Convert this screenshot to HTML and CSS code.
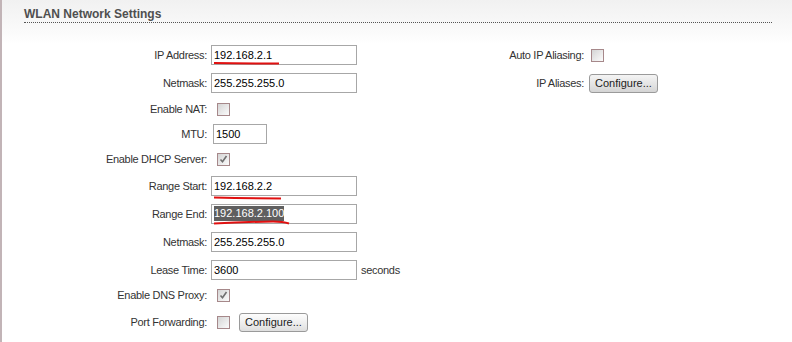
FILE: index.html
```html
<!DOCTYPE html>
<html>
<head>
  <title>WLAN Network Settings</title>
  <link rel="stylesheet" href="styles.css">
</head>
<body>
<div class="page">
  <div class="section">
    <h2 class="title">WLAN Network Settings</h2>
    <div class="form">
      <!-- row 1 -->
      <label class="lbl">IP Address:</label>
      <div class="ctl">
        <span class="mark">
          <input type="text" class="txt" value="192.168.2.1">
          <svg class="scribble s1" width="70" height="4" viewBox="0 0 70 4"><path d="M1 2 L20 2.2 L66 2.6" stroke="#e01010" stroke-width="2" fill="none"/></svg>
        </span>
      </div>
      <label class="lbl">Auto IP Aliasing:</label>
      <div class="ctl"><span class="chk right"></span></div>

      <!-- row 2 -->
      <label class="lbl">Netmask:</label>
      <div class="ctl"><input type="text" class="txt" value="255.255.255.0"></div>
      <label class="lbl">IP Aliases:</label>
      <div class="ctl"><button class="btn right">Configure...</button></div>

      <label class="lbl">Enable NAT:</label>
      <div class="ctl wide"><span class="chk"></span></div>

      <label class="lbl">MTU:</label>
      <div class="ctl wide"><input type="text" class="txt short" value="1500"></div>

      <label class="lbl">Enable DHCP Server:</label>
      <div class="ctl wide"><span class="chk on"><svg width="11" height="11" viewBox="0 0 11 11"><path d="M2.5 5.5 L4.5 7.8 L8.5 2" stroke="#6f6f6f" stroke-width="1.6" fill="none"/></svg></span></div>

      <label class="lbl">Range Start:</label>
      <div class="ctl wide">
        <span class="mark">
          <input type="text" class="txt" value="192.168.2.2">
          <svg class="scribble s2" width="70" height="4" viewBox="0 0 70 4"><path d="M1 1.5 L22 2 L68 2.5" stroke="#e01010" stroke-width="2" fill="none"/></svg>
        </span>
      </div>

      <label class="lbl">Range End:</label>
      <div class="ctl wide">
        <span class="mark">
          <div class="txt"><span class="sel">192.168.2.100</span></div>
          <svg class="scribble s3" width="80" height="6" viewBox="0 0 80 6"><path d="M1 4.5 Q30 3 60 2.5 Q70 2.5 76 4.5" stroke="#e01010" stroke-width="2" fill="none"/></svg>
        </span>
      </div>

      <label class="lbl">Netmask:</label>
      <div class="ctl wide"><input type="text" class="txt" value="255.255.255.0"></div>

      <label class="lbl">Lease Time:</label>
      <div class="ctl wide"><input type="text" class="txt" value="3600"><span class="unit">seconds</span></div>

      <label class="lbl">Enable DNS Proxy:</label>
      <div class="ctl wide"><span class="chk on"><svg width="11" height="11" viewBox="0 0 11 11"><path d="M2.5 5.5 L4.5 7.8 L8.5 2" stroke="#6f6f6f" stroke-width="1.6" fill="none"/></svg></span></div>

      <label class="lbl">Port Forwarding:</label>
      <div class="ctl wide"><span class="chk"></span><button class="btn">Configure...</button></div>
    </div>
  </div>
</div>
</body>
</html>
```

FILE: styles.css
```css
* {
  box-sizing: border-box;
}
body {
  margin: 0;
  padding: 0;
  font-family: "Liberation Sans", Arial, sans-serif;
  font-size: 11px;
  color: #333;
  background: #fff;
}
.page {
  height: 342px;
  border-left: 2px solid #c2b4b7;
  background: linear-gradient(#f1f1f1, #fafafa 30px, #fff 44px);
}
.section {
  padding: 0 20px 0 22px;
}
.title {
  margin: 0;
  padding: 7px 0 1px;
  font-size: 12px;
  line-height: 14px;
  font-weight: bold;
  color: #4f4f4f;
  border-bottom: 1px dotted #555;
}
.form {
  margin-top: 18px;
  display: grid;
  grid-template-columns: 183px 229px 140px auto;
  grid-template-rows: 28px 28px 24px 25px 26px 27px 29px 28px 27px 24px 30px;
  column-gap: 4px;
}
.lbl {
  display: flex;
  align-items: center;
  justify-content: flex-end;
  color: #333;
  letter-spacing: -0.3px;
  white-space: nowrap;
}
.ctl {
  display: flex;
  align-items: center;
}
.ctl.wide {
  grid-column: 2 / 5;
}
.txt {
  width: 146px;
  height: 20px;
  margin: 0;
  padding: 0 2px;
  border: 1px solid #a7a7a7;
  background: #fff;
  font-family: "Liberation Sans", Arial, sans-serif;
  font-size: 11px;
  color: #000;
  display: flex;
  align-items: center;
  outline: none;
}
.txt.short {
  width: 54px;
  margin-left: 2px;
}
.sel {
  background: #5f5f5f;
  color: #fff;
  line-height: 15px;
}
.unit {
  margin-left: 4px;
  color: #333;
  letter-spacing: -0.3px;
}
.mark {
  position: relative;
  display: inline-block;
}
.scribble {
  position: absolute;
  left: 2px;
}
.s1 {
  top: 16px;
}
.s2 {
  top: 20px;
}
.s3 {
  top: 15px;
}
.chk {
  width: 13px;
  height: 13px;
  margin-left: 6px;
  border: 1px solid #a6888a;
  background: linear-gradient(135deg, #d4d4d4, #ececec 60%, #fbfbfb);
  display: inline-flex;
  align-items: center;
  justify-content: center;
}
.chk.right {
  margin-left: 3px;
}
.btn {
  height: 19px;
  margin: 0 0 0 9px;
  padding: 0 5px;
  border: 1px solid #9a9a9a;
  border-radius: 3px;
  background: linear-gradient(#fdfdfd, #ececec 60%, #dedede);
  font-family: "Liberation Sans", Arial, sans-serif;
  font-size: 11px;
  color: #222;
  cursor: pointer;
}
.btn.right {
  margin-left: 1px;
  background: linear-gradient(#f4f4f4, #e2e2e2 60%, #d4d4d4);
}
```
